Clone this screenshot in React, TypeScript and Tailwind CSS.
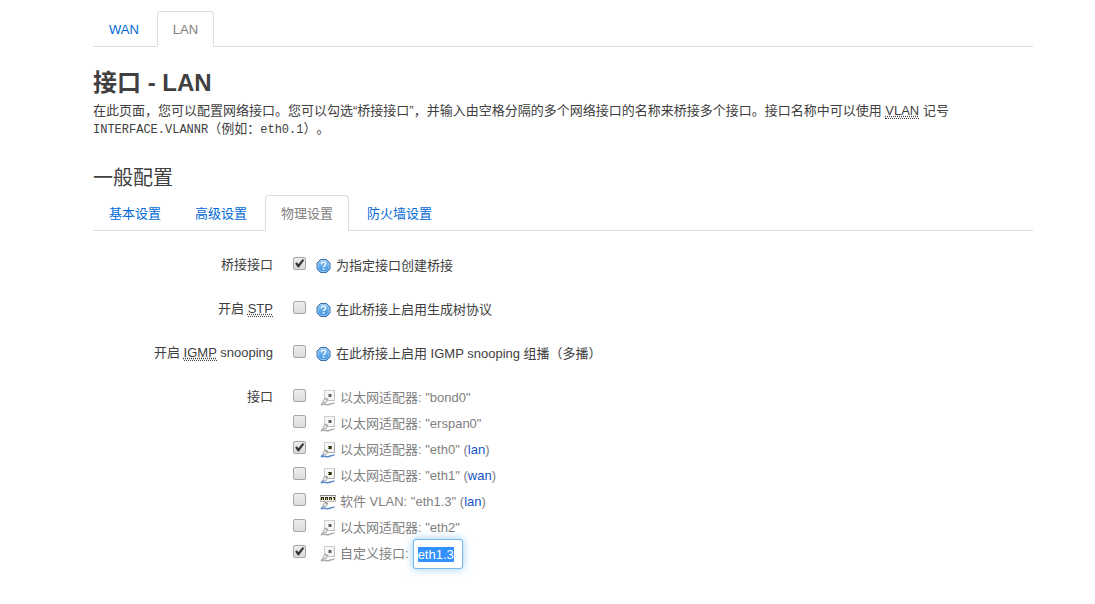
import { ReactNode, useEffect, useRef } from 'react';
import clsx from 'clsx';

type IconKind = 'off' | 'on' | 'vlan';

interface Device {
  id: string;
  label: string;
  name: string;
  network?: string;
  icon: IconKind;
  checked?: boolean;
}

const devices: Device[] = [
  { id: 'bond0', label: '以太网适配器', name: 'bond0', icon: 'off' },
  { id: 'erspan0', label: '以太网适配器', name: 'erspan0', icon: 'off' },
  { id: 'eth0', label: '以太网适配器', name: 'eth0', network: 'lan', icon: 'on', checked: true },
  { id: 'eth1', label: '以太网适配器', name: 'eth1', network: 'wan', icon: 'on' },
  { id: 'eth1-3', label: '软件 VLAN', name: 'eth1.3', network: 'lan', icon: 'vlan' },
  { id: 'eth2', label: '以太网适配器', name: 'eth2', icon: 'off' },
];

function Tabs({ items, active }: { items: string[]; active: string }) {
  return (
    <ul className="flex gap-0.5 border-b border-[#ddd]">
      {items.map((item) => (
        <li key={item} className="-mb-px">
          <a
            href="#"
            className={clsx(
              'block rounded-t border px-[15px] pt-0.5 leading-8',
              item === active
                ? 'border-[#ddd] border-b-white bg-white text-[#808080]'
                : 'border-transparent text-[#0069d6]'
            )}
          >
            {item}
          </a>
        </li>
      ))}
    </ul>
  );
}

function Abbr({ children }: { children: ReactNode }) {
  return <abbr className="border-b border-dotted border-[#404040] underline decoration-dotted">{children}</abbr>;
}

function Checkbox({ id, label, checked }: { id: string; label?: string; checked?: boolean }) {
  return (
    <span className="relative mb-[5px] h-[13px] w-[13px] shrink-0">
      <input
        id={id}
        type="checkbox"
        aria-label={label}
        defaultChecked={checked}
        className="peer block h-[13px] w-[13px] appearance-none rounded-xs border border-[#a6a6a6] bg-linear-to-b from-[#ededed] to-[#dcdcdc]"
      />
      <svg
        viewBox="0 0 13 13"
        className="pointer-events-none absolute inset-0 hidden h-[13px] w-[13px] peer-checked:block"
      >
        <path d="M2.2 6.6 L4 5.3 L5.4 7.3 L9.6 1.9 L11.2 3.2 L5.8 10.4 L4.8 10.4 Z" fill="#333" />
      </svg>
    </span>
  );
}

function HelpIcon() {
  return (
    <svg width="16" height="16" viewBox="1 0 16 16" className="shrink-0">
      <defs>
        <linearGradient id="help" x1="0" y1="0" x2="0" y2="1">
          <stop offset="0" stopColor="#8cc4f2" />
          <stop offset="1" stopColor="#3f93dd" />
        </linearGradient>
      </defs>
      <path
        d="M5 1.5h6L14.5 5v6L11 14.5H5L1.5 11V5z"
        transform="translate(0.5 0)"
        fill="url(#help)"
        stroke="#3a6ea8"
        strokeLinejoin="round"
      />
      <path d="M5.800 2.500h5.400L14 5.300v5.400l-2.800 2.800H5.800L3 10.700V5.300z" fill="none" stroke="#a9d3f6" strokeWidth="0.700" />
      <path d="M6.300 6.200c0-1.300 1-2 2.200-2s2.200.7 2.200 1.900c0 1.500-2.100 1.500-2.100 3" fill="none" stroke="#fff" strokeWidth="1.300" />
      <rect x="7.800" y="10.200" width="1.600" height="1.600" fill="#fff" />
    </svg>
  );
}

function PortIcon({ kind }: { kind: IconKind }) {
  const on = kind !== 'off';
  return (
    <svg width="16" height="16" viewBox="0 0 16 16" className="shrink-0">
      {kind === 'vlan' ? (
        <>
          <rect x="0.500" y="1.500" width="15" height="6" fill="#f0f0ec" stroke="#bdbdb8" />
          <path d="M0 1.500h16" stroke="#8a8a86" />
          <path d="M1 3h3v3H1zM5 3h3v3H5zM9 3h3v3H9zM13 3h2v3h-2z" fill="#2c2c28" />
          <path d="M2 4h1v2H2zM6 4h1v2H6zM10 4h1v2h-1zM13 4h1v2h-1z" fill="#d8bd3c" />
        </>
      ) : (
        <>
          <rect x="4.500" y="0.500" width="10" height="10" fill="#f6f6f4" stroke="#cfcfcc" />
          <path d="M14.500 1v9.500H8" fill="none" stroke={on ? '#aaa' : '#c0c0c0'} />
          <path d="M8 4h4v3H8z" fill={on ? '#77733f' : '#adadad'} />
          <path d="M9 4h2v3H9z" fill={on ? '#26261f' : '#606060'} />
          {on && <path d="M8 5h1v1H8z" fill="#dcc544" />}
        </>
      )}
      <path
        d="M1 15c3.500-2 5 .400 8-.500 2-.600 3.500-1.200 5.500-1.500"
        fill="none"
        stroke={on ? '#5b8ccc' : '#adadad'}
        strokeWidth="1.500"
      />
      <path d="M3 11.200 5 8l2.800 1.200-1.400 3.200-2.600.8z" fill="#e6e6e6" stroke="#999" strokeWidth="0.800" />
      <path d="M5.500 8.800l1.700.800" stroke={on ? '#555' : '#888'} strokeWidth="0.800" />
      <path d="M1 14.500l2.500-2" stroke={on ? '#5b8ccc' : '#adadad'} strokeWidth="1.400" />
    </svg>
  );
}

function Row({ htmlFor, label, children }: { htmlFor: string; label: ReactNode; children: ReactNode }) {
  return (
    <div className="flex gap-5">
      <label htmlFor={htmlFor} className="w-[180px] shrink-0 pt-[3px] text-right">
        {label}
      </label>
      <div className="min-w-0 flex-1">{children}</div>
    </div>
  );
}

function FlagRow({ id, label, hint, checked }: { id: string; label: ReactNode; hint: string; checked?: boolean }) {
  return (
    <Row htmlFor={id} label={label}>
      <div className="flex h-[26px] items-center">
        <Checkbox id={id} checked={checked} />
        <span className="ml-2.5 flex items-center gap-1">
          <HelpIcon />
          {hint}
        </span>
      </div>
    </Row>
  );
}

export default function App() {
  const customRef = useRef<HTMLInputElement>(null);

  useEffect(() => {
    customRef.current?.focus();
    customRef.current?.select();
  }, []);

  return (
    <main className="min-h-screen bg-white pt-[11px] pr-[62px] pb-9 pl-[93px] font-['Liberation_Sans','Noto_Sans_CJK_SC',sans-serif] text-[13px] leading-[18px] text-[#404040] [text-spacing-trim:space-all]">
      <Tabs items={['WAN', 'LAN']} active="LAN" />

      <h2 className="mt-[18px] text-2xl leading-9 font-bold">接口 - LAN</h2>
      <p className="pt-px">
        在此页面，您可以配置网络接口。您可以勾选“桥接接口”，并输入由空格分隔的多个网络接口的名称来桥接多个接口。接口名称中可以使用{' '}
        <Abbr>VLAN</Abbr> 记号{' '}
        <span className="inline-block">
          <code className="font-['Liberation_Mono',monospace] text-xs">INTERFACE.VLANNR</code>（例如：
          <code className="font-['Liberation_Mono',monospace] text-xs">eth0.1</code>）。
        </span>
      </p>

      <h3 className="mt-[23px] text-xl leading-[34px]">一般配置</h3>
      <Tabs items={['基本设置', '高级设置', '物理设置', '防火墙设置']} active="物理设置" />

      <form className="mt-[22px] flex flex-col gap-[18px]">
        <FlagRow id="bridge" label="桥接接口" hint="为指定接口创建桥接" checked />
        <FlagRow
          id="stp"
          label={
            <>
              开启 <Abbr>STP</Abbr>
            </>
          }
          hint="在此桥接上启用生成树协议"
        />
        <FlagRow
          id="igmp"
          label={
            <>
              开启 <Abbr>IGMP</Abbr> snooping
            </>
          }
          hint="在此桥接上启用 IGMP snooping 组播（多播）"
        />
        <Row htmlFor="bond0" label="接口">
          <ul className="text-[#808080]">
            {devices.map((d) => (
              <li key={d.id} className="flex h-[26px] items-center">
                <Checkbox id={d.id} checked={d.checked} />
                <label htmlFor={d.id} className="ml-3.5 flex items-center gap-1">
                  <PortIcon kind={d.icon} />
                  <span>
                    {d.label}: "{d.name}"
                    {d.network && (
                      <>
                        {' '}
                        (
                        <a href="#" className="text-[#1453c4]">
                          {d.network}
                        </a>
                        )
                      </>
                    )}
                  </span>
                </label>
              </li>
            ))}
            <li className="flex h-[26px] items-center">
              <Checkbox id="custom" label="自定义接口" checked />
              <label htmlFor="custom-name" className="ml-3.5 flex items-center gap-1">
                <PortIcon kind="off" />
                自定义接口:
              </label>
              <input
                id="custom-name"
                ref={customRef}
                type="text"
                defaultValue="eth1.3"
                className="ml-1 h-[30px] w-[50px] rounded-[3px] border border-[#52a8ec]/80 bg-white px-1 text-[13px] shadow-[0_0_8px_rgba(82,168,236,0.6)] outline-none selection:bg-[#3390ff] selection:text-white"
              />
            </li>
          </ul>
        </Row>
      </form>
    </main>
  );
}
